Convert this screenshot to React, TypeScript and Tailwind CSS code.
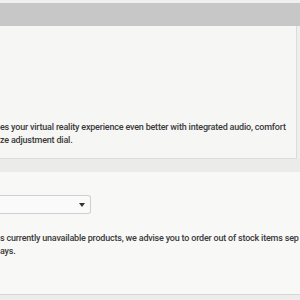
export default function App() {
  return (
    <div className="w-[300px] h-[300px] overflow-hidden bg-[#efefed] flex flex-col font-['Roboto',Arial,sans-serif] text-[#3a3a3a]">
      <div className="h-[3px] shrink-0" />
      <div className="h-[23px] shrink-0 bg-[#c7c7c7]" />

      <section className="h-[133px] shrink-0 mr-[3px] bg-[#f6f6f5] border-r border-b border-[#dcdcda] pt-[95px]">
        <p className="text-[9px] leading-[13px] font-medium whitespace-nowrap tracking-[-0.2px]">
          es your virtual reality experience even better with integrated audio, comfort
          <br />
          ze adjustment dial.
        </p>
      </section>

      <div className="h-[13px] shrink-0 bg-[#ebebea]" />

      <section className="h-[122px] shrink-0 bg-[#f8f8f7] pt-[23px]">
        <div className="w-[91px] h-[19px] bg-[#fafafa] border border-l-0 border-[#cfcfcd] rounded-r-[3px] flex items-center justify-end pr-[5px]">
          <svg width="6" height="4" viewBox="0 0 6 4">
            <path d="M0 0h6L3 4z" fill="#333" />
          </svg>
        </div>
        <p className="mt-[18px] text-[9px] leading-[13px] font-medium whitespace-nowrap tracking-[-0.2px]">
          s currently unavailable products, we advise you to order out of stock items sep
          <br />
          ays.
        </p>
      </section>

      <div className="h-px shrink-0 bg-[#d6d6d4]" />
      <div className="flex-1 bg-[#ececea]" />
    </div>
  );
}
